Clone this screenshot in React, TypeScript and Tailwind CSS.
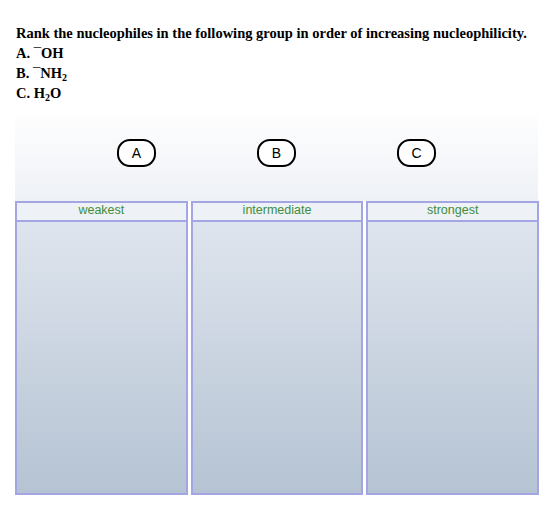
export default function App() {
  const chips = ['A', 'B', 'C'];
  const cols = ['weakest', 'intermediate', 'strongest'];

  return (
    <div className="w-[560px] h-[511px] bg-white relative">
      <div
        className="pt-[23px] pl-[16px] text-[14.5px] leading-[20px] font-bold text-black"
        style={{ fontFamily: '"Liberation Serif", "Times New Roman", serif' }}
      >
        <p>Rank the nucleophiles in the following group in order of increasing nucleophilicity.</p>
        <p>
          A. <span className="font-normal">¯</span>OH
        </p>
        <p>
          B. <span className="font-normal">¯</span>NH<sub className="text-[10px] -bottom-[3px]">2</sub>
        </p>
        <p>
          C. H<sub className="text-[10px] -bottom-[3px]">2</sub>O
        </p>
      </div>

      <div className="ml-[15px] mt-[5px] w-[523px] bg-gradient-to-b from-white to-[#eef1f6]">
        <div className="h-[93px] flex items-start justify-center gap-[101px] pt-[31px]">
          {chips.map(c => (
            <div
              key={c}
              className="w-[39px] h-[28px] rounded-[13px] border-2 border-black bg-white flex items-center justify-center text-[14px] text-black"
              style={{ fontFamily: '"Liberation Sans", Arial, sans-serif' }}
            >
              {c}
            </div>
          ))}
        </div>
      </div>

      <div
        className="ml-[15px] flex gap-[3px] w-[524px]"
        style={{ fontFamily: '"Liberation Sans", Arial, sans-serif' }}
      >
        {cols.map(c => (
          <div key={c} className="flex-1 flex flex-col">
            <div className="h-[21px] border-2 border-[#a4a6e4] bg-[#eef1f6] flex items-start justify-center pt-[0px] leading-[15px] text-[12.5px] text-[#3e8d3a]">
              {c}
            </div>
            <div className="h-[273px] border-2 border-t-0 border-[#a4a6e4] bg-gradient-to-b from-[#dfe5ee] to-[#b5c3d3]" />
          </div>
        ))}
      </div>
    </div>
  );
}
